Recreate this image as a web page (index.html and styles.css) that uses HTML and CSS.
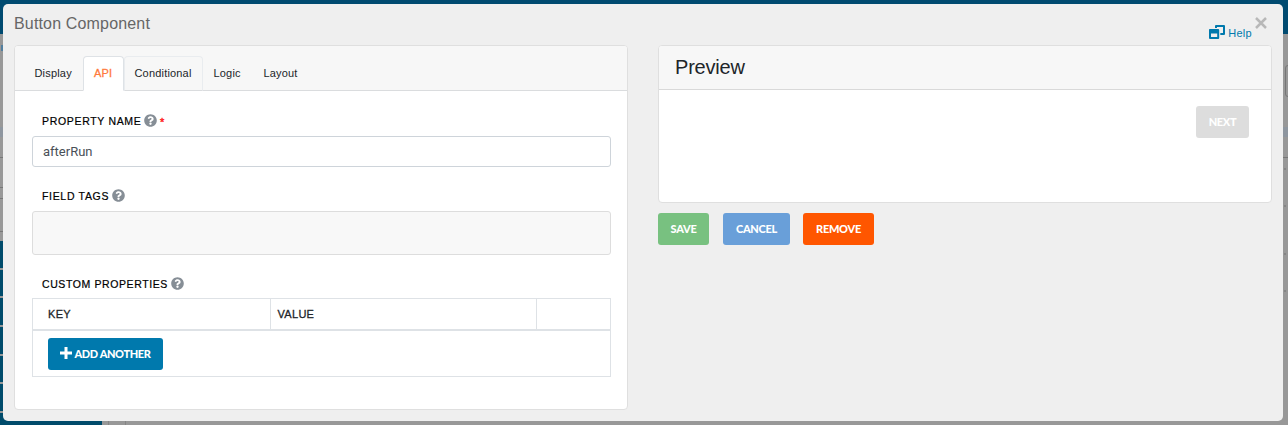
FILE: index.html
```html
<!DOCTYPE html>
<html lang="en">
<head>
<meta charset="utf-8">
<title>Button Component</title>
<link rel="stylesheet" href="styles.css">
</head>
<body>
<svg class="defs" width="0" height="0">
  <symbol id="question" viewBox="0 0 512 512"><path d="M504 256c0 137-111 248-248 248S8 393 8 256 119 8 256 8s248 111 248 248zM262.700 90c-54.500 0-89.300 23-116.500 63.800-3.500 5.300-2.400 12.400 2.700 16.300l34.700 26.300c5.200 3.900 12.600 3 16.700-2.100 17.900-22.700 30.100-35.800 57.300-35.800 20.400 0 45.700 13.100 45.700 33 0 15-12.400 22.700-32.500 34C247.100 238.500 216 254.900 216 296v4c0 6.600 5.400 12 12 12h56c6.600 0 12-5.400 12-12v-1.300c0-28.500 83.200-29.600 83.200-106.700 0-58-60.200-102-116.500-102zM256 338c-25.400 0-46 20.600-46 46s20.600 46 46 46 46-20.600 46-46-20.600-46-46-46z"/></symbol>
</svg>
<div class="page">
  <div class="topbar"></div>
  <div class="page-body">
    <div class="rail">
      <i class="rail-link"></i>
      <i class="rail-shade"></i>
      <i class="rail-line first"></i><i class="rail-line second"></i><i class="rail-line third"></i><i class="rail-line fourth"></i>
      <div class="rail-items"><i></i><i></i><i></i><i></i><i></i><i></i><i></i></div>
    </div>
    <div class="page-main"></div>
    <div class="page-edge"><i class="edge-box"></i><i class="edge-shade"></i><i class="edge-line"></i><i class="dot d1"></i><i class="dot"></i><i class="dot d3"></i><i class="dot"></i></div>
  </div>
</div>
<div class="modal">
  <header class="modal-head">
    <h1>Button Component</h1>
    <a class="help"><svg width="17" height="14" viewBox="0 0 17 14"><path class="ink" fill-rule="evenodd" d="M6 3V1Q6 0 7 0H15Q16 0 16 1V9Q16 10 15 10H11.300V8H14V2H8V3z M0 4.800Q0 4 .800 4H9.200Q10.200 4 10.200 5V13Q10.200 14 9.200 14H1Q0 14 0 13z M2 8.500V12H8.200V8.500z"/></svg><span>Help</span></a>
    <button class="close" aria-label="Close"><svg width="12" height="12" viewBox="0 0 12 12"><path d="M1 1L11 11M11 1L1 11"/></svg></button>
  </header>
  <div class="columns">
    <section class="card editor">
      <nav class="tabs">
        <a class="tab display"><span>Display</span></a><a class="tab api"><span>API</span></a><a class="tab conditional"><span>Conditional</span></a><a class="tab logic"><span>Logic</span></a><a class="tab layout"><span>Layout</span></a>
      </nav>
      <div class="fields">
        <label class="label"><span class="t-name">PROPERTY NAME</span><svg class="q"><use href="#question"/></svg><b class="star">*</b></label>
        <div class="input"><span>afterRun</span></div>
        <label class="label tags-label"><span class="t-tags">FIELD TAGS</span><svg class="q"><use href="#question"/></svg></label>
        <div class="tags"></div>
        <label class="label props-label"><span class="t-props">CUSTOM PROPERTIES</span><svg class="q"><use href="#question"/></svg></label>
        <div class="grid">
          <div class="grid-head"><div><span class="t-key">KEY</span></div><div><span class="t-value">VALUE</span></div><div></div></div>
          <div class="grid-foot"><button class="btn add"><svg width="12" height="12" viewBox="0 0 12 12"><path d="M4.500 0h3v4.500H12v3H7.500V12h-3V7.500H0v-3h4.500z"/></svg><span>ADD ANOTHER</span></button></div>
        </div>
      </div>
    </section>
    <section class="side">
      <div class="card preview">
        <h2><span>Preview</span></h2>
        <div class="preview-body"><button class="btn next"><span>NEXT</span></button></div>
      </div>
      <div class="actions"><button class="btn save"><span>SAVE</span></button><button class="btn cancel"><span>CANCEL</span></button><button class="btn remove"><span>REMOVE</span></button></div>
    </section>
  </div>
</div>
</body>
</html>
```
FILE: styles.css
```css
* { box-sizing: border-box; }
body { margin: 0; width: 1288px; height: 425px; overflow: hidden; position: relative; font-family: "Liberation Sans", Arial, sans-serif; color: #212529; }
h1, h2 { margin: 0; font-weight: 400; }
span { white-space: nowrap; }
i { display: block; flex: none; }
.defs { position: absolute; }
.page { height: 425px; overflow: hidden; background: #989898; display: flex; flex-direction: column; }
.topbar { height: 34px; flex: none; background: #004a70; }
.page-body { height: 391px; overflow: hidden; flex: none; display: flex; }
.rail { width: 102px; display: flex; flex-direction: column; }
.rail-link { margin: 11px 0 0 1px; height: 6px; background: #527f9f; }
.rail-shade { margin-top: 76px; height: 10px; background: #8e969f; }
.rail-line { height: 1px; background: #777; }
.first { margin-top: 20px; }
.second { margin-top: 29px; }
.third { margin-top: 10px; }
.fourth { margin-top: 32px; }
.rail-items { margin-top: 9px; display: flex; flex-direction: column; gap: 2px; }
.rail-items i { height: 26.7px; background: #004b6b; }
.page-main { flex: 1; margin-left: 6px; border-left: 1px solid #858585; }
.page-main::before { content: ""; display: block; width: 16px; height: 100%; border-right: 1px solid #858585; }
.page-edge { width: 5px; overflow: hidden; padding-top: 31px; }
.edge-box { width: 12px; height: 32px; margin-left: 2px; border: 1px solid #777; border-radius: 3px; }
.edge-shade { height: 10px; margin-top: 30px; background: #8e969f; }
.edge-line { height: 1px; margin-top: 20px; background: #777; }
.dot { width: 2px; height: 2px; margin: 35px 0 0 1px; background: #858585; }
.d1 { margin-top: 10px; }
.d3 { margin-top: 46px; }

.modal { position: absolute; left: 3px; top: 4px; width: 1280px; height: 417px; background: #efefef; border-radius: 5px; padding: 0 11px; }
.modal-head { height: 41px; display: flex; align-items: flex-start; }
h1 { font-size: 16px; line-height: 20px; letter-spacing: .16px; color: #666; margin-top: 10px; flex: 1; }
.help { display: flex; align-items: flex-start; margin-top: 21px; color: #0079ad; font-size: 11px; line-height: 16px; letter-spacing: .3px; gap: 2px; }
.help .ink { fill: #0079ad; }
.close { border: 0; padding: 0; background: none; margin: 13px 5px 0 3px; height: 12px; display: flex; }
.close path { stroke: #b8b8b8; stroke-width: 2.5; }
.columns { display: flex; gap: 30px; }
.card { background: #fff; border: 1px solid #dfdfdf; border-radius: 4px; }
.editor { width: 614px; height: 365px; }
.tabs { height: 45px; background: #f7f7f7; border-bottom: 1px solid #dadcde; border-radius: 3px 3px 0 0; display: flex; align-items: flex-end; padding-left: 9px; }
.tab { height: 35px; margin-bottom: -1px; border: 1px solid transparent; border-radius: 4px 4px 0 0; font-size: 11px; line-height: 33px; letter-spacing: .18px; padding-left: 9.5px; }
.display { width: 59px; }
.api { width: 41px; padding-left: 10px; background: #fff; border-color: #dee2e6 #dee2e6 #fff; color: #ff7a3c; -webkit-text-stroke: .3px #ff7a3c; }
.conditional { width: 79px; background: #f7f7f7; border-color: #e9ecef #e9ecef #dadcde; }
.logic { width: 50px; }
.fields { padding: 22px 16px 0 17px; }
.label { height: 16px; margin-left: 10px; display: flex; font-size: 10.5px; line-height: 17px; letter-spacing: .72px; color: #000; -webkit-text-stroke: .2px #000; }
.t-name { width: 99px; letter-spacing: .68px; }
.t-tags { width: 67px; letter-spacing: .68px; }
.t-props { width: 126px; letter-spacing: .6px; }
.q { width: 13px; height: 13px; margin: .5px 0 0 3px; fill: #868e96; stroke: none; }
.star { color: #f22; margin-left: 3px; font-size: 11px; line-height: 18px; font-weight: 400; -webkit-text-stroke: .4px #f22; }
.input { height: 31px; margin-top: 7px; border: 1px solid #ced4da; border-radius: 3px; padding-left: 10px; font: 13px/29px Roboto, sans-serif; color: #495057; }
.tags-label { margin-top: 21px; }
.tags { height: 44px; margin-top: 7px; border: 1px solid #ddd; border-radius: 3px; background: #f8f8f8; }
.props-label { margin-top: 21px; }
.grid { margin-top: 6px; border: 1px solid #dee2e6; }
.grid-head { display: grid; grid-template-columns: 238px 266px 1fr; height: 32px; border-bottom: 2px solid #dee2e6; font-size: 11px; line-height: 30px; letter-spacing: .3px; -webkit-text-stroke: .3px #212529; }
.grid-head div { padding-left: 6.5px; border-right: 1px solid #dee2e6; }
.grid-head div:first-child { padding-left: 15px; }
.grid-head div:last-child { border: 0; }
.grid-foot { height: 45px; padding: 7px 15px; }
.btn { height: 32px; border: 0; border-radius: 3px; padding: 0; color: #fff; display: flex; align-items: center; justify-content: center; font: 900 11px/32px Lato, sans-serif; letter-spacing: -.3px; }
.add { width: 115px; background: #0079ad; gap: 2px; letter-spacing: -.38px; }
.add svg { fill: #fff; margin-top: -3px; }
.side { width: 614px; }
.preview { height: 158px; }
h2 { height: 44px; background: #f7f7f7; border-bottom: 1px solid #d9d9d9; border-radius: 3px 3px 0 0; font-size: 20px; line-height: 43px; letter-spacing: -.2px; padding-left: 16px; }
.preview-body { display: flex; justify-content: flex-end; padding: 16px 22px; }
.next { width: 53px; background: #ddd; }
.actions { display: flex; margin-top: 10px; }
.save { width: 51px; margin-right: 14px; background: #78c180; }
.cancel { width: 67px; margin-right: 13px; background: #699fd9; }
.remove { width: 71px; background: #ff5600; }
```
